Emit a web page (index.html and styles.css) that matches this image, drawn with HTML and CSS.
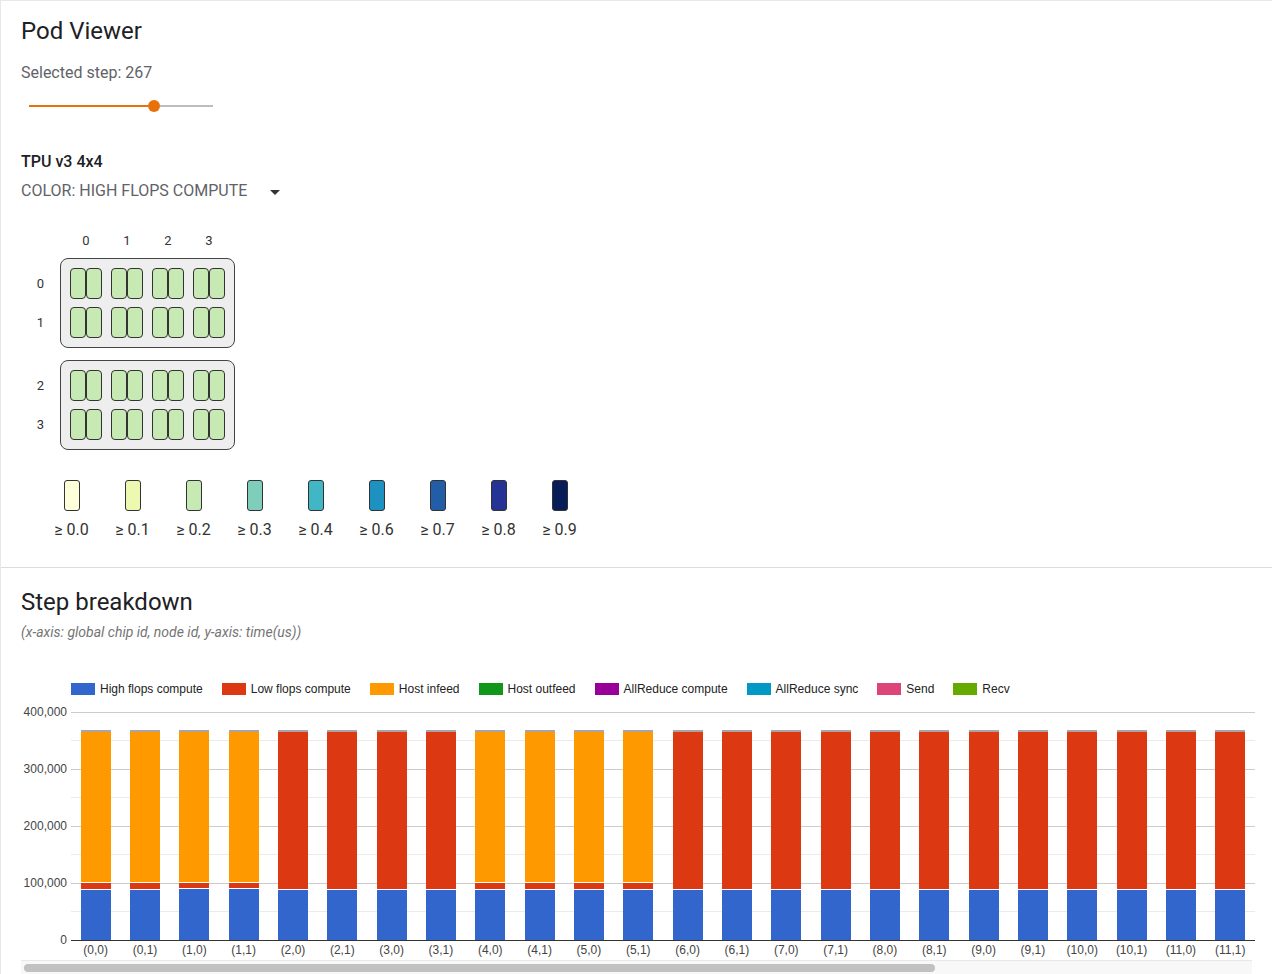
FILE: index.html
```html
<!DOCTYPE html>
<html>
<head>
<meta charset="utf-8">
<title>Pod Viewer</title>
<link rel="stylesheet" href="styles.css">
</head>
<body>
<div class="page">
  <section class="pod">
    <h1 class="title">Pod Viewer</h1>
    <div class="step">Selected step: 267</div>
    <div class="slider">
      <div class="track-active"></div>
      <div class="thumb"></div>
      <div class="track-rest"></div>
    </div>
    <div class="topo">TPU v3 4x4</div>
    <div class="color-select"><span>COLOR: HIGH FLOPS COMPUTE</span><span class="arrow"></span></div>

    <div class="topology">
      <div class="col-labels"><span>0</span><span>1</span><span>2</span><span>3</span></div>
      <div class="tray-row">
        <div class="row-labels"><span>0</span><span>1</span></div>
        <div class="tray">
          <div class="pair"><div class="core"></div><div class="core"></div></div>
          <div class="pair"><div class="core"></div><div class="core"></div></div>
          <div class="pair"><div class="core"></div><div class="core"></div></div>
          <div class="pair"><div class="core"></div><div class="core"></div></div>
          <div class="pair"><div class="core"></div><div class="core"></div></div>
          <div class="pair"><div class="core"></div><div class="core"></div></div>
          <div class="pair"><div class="core"></div><div class="core"></div></div>
          <div class="pair"><div class="core"></div><div class="core"></div></div>
        </div>
      </div>
      <div class="tray-row">
        <div class="row-labels"><span>2</span><span>3</span></div>
        <div class="tray">
          <div class="pair"><div class="core"></div><div class="core"></div></div>
          <div class="pair"><div class="core"></div><div class="core"></div></div>
          <div class="pair"><div class="core"></div><div class="core"></div></div>
          <div class="pair"><div class="core"></div><div class="core"></div></div>
          <div class="pair"><div class="core"></div><div class="core"></div></div>
          <div class="pair"><div class="core"></div><div class="core"></div></div>
          <div class="pair"><div class="core"></div><div class="core"></div></div>
          <div class="pair"><div class="core"></div><div class="core"></div></div>
        </div>
      </div>
    </div>

    <div class="scale">
      <div class="scale-item"><div class="swatch c0"></div><span>≥ 0.0</span></div>
      <div class="scale-item"><div class="swatch c1"></div><span>≥ 0.1</span></div>
      <div class="scale-item"><div class="swatch c2"></div><span>≥ 0.2</span></div>
      <div class="scale-item"><div class="swatch c3"></div><span>≥ 0.3</span></div>
      <div class="scale-item"><div class="swatch c4"></div><span>≥ 0.4</span></div>
      <div class="scale-item"><div class="swatch c6"></div><span>≥ 0.6</span></div>
      <div class="scale-item"><div class="swatch c7"></div><span>≥ 0.7</span></div>
      <div class="scale-item"><div class="swatch c8"></div><span>≥ 0.8</span></div>
      <div class="scale-item"><div class="swatch c9"></div><span>≥ 0.9</span></div>
    </div>
  </section>

  <section class="breakdown">
    <h2 class="title">Step breakdown</h2>
    <div class="sub">(x-axis: global chip id, node id, y-axis: time(us))</div>

    <div class="chart">
      <div class="chart-legend">
        <div class="lg"><i class="k-high"></i>High flops compute</div>
        <div class="lg"><i class="k-low"></i>Low flops compute</div>
        <div class="lg"><i class="k-in"></i>Host infeed</div>
        <div class="lg"><i class="k-out"></i>Host outfeed</div>
        <div class="lg"><i class="k-arc"></i>AllReduce compute</div>
        <div class="lg"><i class="k-ars"></i>AllReduce sync</div>
        <div class="lg"><i class="k-send"></i>Send</div>
        <div class="lg"><i class="k-recv"></i>Recv</div>
      </div>

      <div class="plot-row">
        <div class="yaxis"><span>400,000</span><span>300,000</span><span>200,000</span><span>100,000</span><span>0</span></div>
        <div class="plot">
          <div class="slot"><div class="bar"><div class="seg k-high" style="height:50px"></div><div class="seg k-low sep" style="height:7px"></div><div class="seg k-in sep" style="height:151px"></div><div class="seg cap" style="height:2px"></div></div></div>
          <div class="slot"><div class="bar"><div class="seg k-high" style="height:50px"></div><div class="seg k-low sep" style="height:7px"></div><div class="seg k-in sep" style="height:151px"></div><div class="seg cap" style="height:2px"></div></div></div>
          <div class="slot"><div class="bar"><div class="seg k-high" style="height:51px"></div><div class="seg k-low sep" style="height:6px"></div><div class="seg k-in sep" style="height:151px"></div><div class="seg cap" style="height:2px"></div></div></div>
          <div class="slot"><div class="bar"><div class="seg k-high" style="height:51px"></div><div class="seg k-low sep" style="height:6px"></div><div class="seg k-in sep" style="height:151px"></div><div class="seg cap" style="height:2px"></div></div></div>
          <div class="slot"><div class="bar"><div class="seg k-high" style="height:50px"></div><div class="seg k-low sep" style="height:158px"></div><div class="seg cap" style="height:2px"></div></div></div>
          <div class="slot"><div class="bar"><div class="seg k-high" style="height:50px"></div><div class="seg k-low sep" style="height:158px"></div><div class="seg cap" style="height:2px"></div></div></div>
          <div class="slot"><div class="bar"><div class="seg k-high" style="height:50px"></div><div class="seg k-low sep" style="height:158px"></div><div class="seg cap" style="height:2px"></div></div></div>
          <div class="slot"><div class="bar"><div class="seg k-high" style="height:50px"></div><div class="seg k-low sep" style="height:158px"></div><div class="seg cap" style="height:2px"></div></div></div>
          <div class="slot"><div class="bar"><div class="seg k-high" style="height:50px"></div><div class="seg k-low sep" style="height:7px"></div><div class="seg k-in sep" style="height:151px"></div><div class="seg cap" style="height:2px"></div></div></div>
          <div class="slot"><div class="bar"><div class="seg k-high" style="height:50px"></div><div class="seg k-low sep" style="height:7px"></div><div class="seg k-in sep" style="height:151px"></div><div class="seg cap" style="height:2px"></div></div></div>
          <div class="slot"><div class="bar"><div class="seg k-high" style="height:50px"></div><div class="seg k-low sep" style="height:7px"></div><div class="seg k-in sep" style="height:151px"></div><div class="seg cap" style="height:2px"></div></div></div>
          <div class="slot"><div class="bar"><div class="seg k-high" style="height:50px"></div><div class="seg k-low sep" style="height:7px"></div><div class="seg k-in sep" style="height:151px"></div><div class="seg cap" style="height:2px"></div></div></div>
          <div class="slot"><div class="bar"><div class="seg k-high" style="height:50px"></div><div class="seg k-low sep" style="height:158px"></div><div class="seg cap" style="height:2px"></div></div></div>
          <div class="slot"><div class="bar"><div class="seg k-high" style="height:50px"></div><div class="seg k-low sep" style="height:158px"></div><div class="seg cap" style="height:2px"></div></div></div>
          <div class="slot"><div class="bar"><div class="seg k-high" style="height:50px"></div><div class="seg k-low sep" style="height:158px"></div><div class="seg cap" style="height:2px"></div></div></div>
          <div class="slot"><div class="bar"><div class="seg k-high" style="height:50px"></div><div class="seg k-low sep" style="height:158px"></div><div class="seg cap" style="height:2px"></div></div></div>
          <div class="slot"><div class="bar"><div class="seg k-high" style="height:50px"></div><div class="seg k-low sep" style="height:158px"></div><div class="seg cap" style="height:2px"></div></div></div>
          <div class="slot"><div class="bar"><div class="seg k-high" style="height:50px"></div><div class="seg k-low sep" style="height:158px"></div><div class="seg cap" style="height:2px"></div></div></div>
          <div class="slot"><div class="bar"><div class="seg k-high" style="height:50px"></div><div class="seg k-low sep" style="height:158px"></div><div class="seg cap" style="height:2px"></div></div></div>
          <div class="slot"><div class="bar"><div class="seg k-high" style="height:50px"></div><div class="seg k-low sep" style="height:158px"></div><div class="seg cap" style="height:2px"></div></div></div>
          <div class="slot"><div class="bar"><div class="seg k-high" style="height:50px"></div><div class="seg k-low sep" style="height:158px"></div><div class="seg cap" style="height:2px"></div></div></div>
          <div class="slot"><div class="bar"><div class="seg k-high" style="height:50px"></div><div class="seg k-low sep" style="height:158px"></div><div class="seg cap" style="height:2px"></div></div></div>
          <div class="slot"><div class="bar"><div class="seg k-high" style="height:50px"></div><div class="seg k-low sep" style="height:158px"></div><div class="seg cap" style="height:2px"></div></div></div>
          <div class="slot"><div class="bar"><div class="seg k-high" style="height:50px"></div><div class="seg k-low sep" style="height:158px"></div><div class="seg cap" style="height:2px"></div></div></div>
        </div>
      </div>

      <div class="xaxis">
        <span>(0,0)</span><span>(0,1)</span><span>(1,0)</span><span>(1,1)</span>
        <span>(2,0)</span><span>(2,1)</span><span>(3,0)</span><span>(3,1)</span>
        <span>(4,0)</span><span>(4,1)</span><span>(5,0)</span><span>(5,1)</span>
        <span>(6,0)</span><span>(6,1)</span><span>(7,0)</span><span>(7,1)</span>
        <span>(8,0)</span><span>(8,1)</span><span>(9,0)</span><span>(9,1)</span>
        <span>(10,0)</span><span>(10,1)</span><span>(11,0)</span><span>(11,1)</span>
      </div>

      <div class="scrollbar"><div class="scroll-thumb"></div></div>
    </div>
  </section>
</div>
</body>
</html>
```

FILE: styles.css
```css
html, body {
  margin: 0;
  padding: 0;
  overflow: hidden;
  background: #ffffff;
}

body {
  font-family: Roboto, "Noto Sans", "Liberation Sans", sans-serif;
  color: #202124;
}

.page {
  width: 1271px;
  min-height: 973px;
  border-top: 1px solid #e8e8e8;
  border-left: 1px solid #e8e8e8;
}

.pod {
  padding: 14px 20px 27px;
  border-bottom: 1px solid #dcdcdc;
}

.title {
  margin: 0;
  font-size: 24px;
  line-height: 32px;
  font-weight: 400;
  color: #202124;
}

.step {
  margin-top: 16px;
  font-size: 16px;
  line-height: 20px;
  color: #5f6368;
}

.slider {
  margin: 13px 0 0 8px;
  width: 184px;
  height: 20px;
  display: flex;
  align-items: center;
}

.track-active {
  width: 119px;
  height: 2px;
  background: #e8710a;
}

.thumb {
  width: 12px;
  height: 12px;
  border-radius: 50%;
  background: #e8710a;
}

.track-rest {
  flex: 1;
  height: 2px;
  background: #bdbdbd;
}

.topo {
  margin-top: 36px;
  font-size: 16px;
  line-height: 20px;
  font-weight: 500;
  color: #202124;
}

.color-select {
  margin-top: 9px;
  font-size: 16px;
  line-height: 20px;
  color: #5f6368;
  display: flex;
  align-items: center;
}

.arrow {
  margin-left: 23px;
  margin-top: 2px;
  width: 0;
  height: 0;
  border-left: 5px solid transparent;
  border-right: 5px solid transparent;
  border-top: 5px solid #333333;
}

.topology {
  margin-top: 32px;
  font-size: 13px;
  line-height: 16px;
  color: #333333;
}

.col-labels {
  display: flex;
  gap: 9px;
  margin-left: 49px;
  margin-bottom: 9px;
}

.col-labels span {
  width: 32px;
  text-align: center;
}

.tray-row {
  display: flex;
  align-items: flex-start;
}

.tray-row + .tray-row {
  margin-top: 12px;
}

.row-labels {
  width: 39px;
  padding-top: 10px;
  display: flex;
  flex-direction: column;
  gap: 8px;
}

.row-labels span {
  height: 31px;
  line-height: 31px;
  text-align: center;
}

.tray {
  display: grid;
  grid-template-columns: repeat(4, 32px);
  column-gap: 9px;
  row-gap: 8px;
  padding: 9px;
  border: 1px solid #444444;
  border-radius: 8px;
  background: #eeeeee;
}

.pair {
  display: flex;
}

.core {
  width: 16px;
  height: 31px;
  box-sizing: border-box;
  border: 1px solid #333333;
  border-radius: 4px;
  background: #c7e9b4;
}

.scale {
  margin: 30px 0 0 20px;
  display: flex;
}

.scale-item {
  width: 61px;
  display: flex;
  flex-direction: column;
  align-items: center;
  gap: 9px;
  font-size: 16px;
  line-height: 20px;
  color: #333333;
}

.swatch {
  width: 16px;
  height: 31px;
  box-sizing: border-box;
  border: 1px solid #333333;
  border-radius: 3px;
}

.c0 { background: #ffffd9; }
.c1 { background: #edf8b1; }
.c2 { background: #c7e9b4; }
.c3 { background: #7fcdbb; }
.c4 { background: #41b6c4; }
.c6 { background: #1d91c0; }
.c7 { background: #225ea8; }
.c8 { background: #253494; }
.c9 { background: #081d58; }

.breakdown {
  padding: 18px 20px 0;
}

.sub {
  margin-top: 5px;
  font-size: 14px;
  line-height: 18px;
  font-style: italic;
  color: #757575;
}

.chart {
  margin-top: 42px;
  width: 1234px;
  font-family: "Liberation Sans", Arial, sans-serif;
  font-size: 12px;
}

.chart-legend {
  display: flex;
  gap: 19px;
  padding-left: 50px;
  height: 12px;
  line-height: 12px;
  color: #222222;
}

.lg {
  display: flex;
  align-items: center;
  gap: 5px;
  white-space: nowrap;
}

.lg i {
  display: block;
  width: 24px;
  height: 12px;
}

.k-high { background: #3366cc; }
.k-low { background: #dc3912; }
.k-in { background: #ff9900; }
.k-out { background: #109618; }
.k-arc { background: #990099; }
.k-ars { background: #0099c6; }
.k-send { background: #dd4477; }
.k-recv { background: #66aa00; }
.cap { background: #a8a4a8; }

.plot-row {
  margin-top: 17px;
  display: grid;
  grid-template-columns: 50px 1fr;
}

.yaxis {
  height: 242px;
  margin: -7px 0;
  padding-right: 4px;
  display: flex;
  flex-direction: column;
  justify-content: space-between;
  align-items: flex-end;
  line-height: 14px;
  color: #444444;
}

.plot {
  height: 228px;
  border-bottom: 1px solid #333333;
  display: flex;
  align-items: flex-end;
  background-image: repeating-linear-gradient(to bottom,
    #cccccc 0, #cccccc 1px,
    transparent 1px, transparent 28px,
    #ebebeb 28px, #ebebeb 29px,
    transparent 29px, transparent 57px);
}

.slot {
  flex: 1;
  display: flex;
  justify-content: center;
}

.bar {
  width: 30px;
  display: flex;
  flex-direction: column-reverse;
}

.seg {
  box-sizing: border-box;
}

.seg.sep {
  border-bottom: 1px solid #ffffff;
}

.xaxis {
  margin-top: 2px;
  padding-left: 50px;
  display: flex;
  line-height: 14px;
  color: #444444;
}

.xaxis span {
  flex: 1;
  text-align: center;
  white-space: nowrap;
}

.scrollbar {
  margin-top: 3px;
  width: 1231px;
  height: 14px;
  border-top: 1px solid #e8e8e8;
  background: #f8f8f8;
  padding-top: 3px;
  box-sizing: border-box;
}

.scroll-thumb {
  margin-left: 3px;
  width: 911px;
  height: 8px;
  border-radius: 4px;
  background: #c1c1c1;
}
```
